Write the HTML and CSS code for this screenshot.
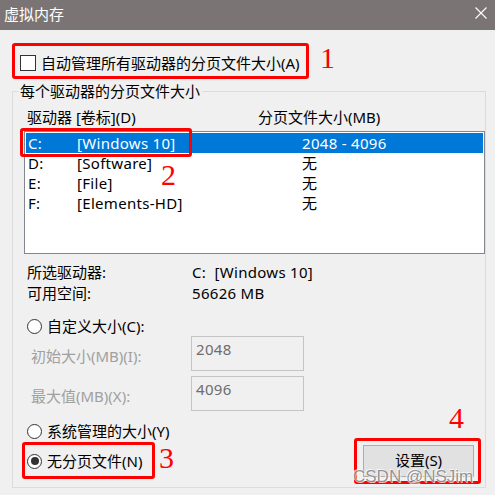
FILE: index.html
```html
<!DOCTYPE html>
<html lang="zh-CN">
<head>
<meta charset="utf-8">
<title>虚拟内存</title>
<link rel="stylesheet" href="styles.css">
</head>
<body>
<div class="window">
  <div class="titlebar">
    <span class="title">虚拟内存</span>
    <svg class="close" width="12" height="12" viewBox="0 0 12 12"><path d="M0.5 0.5L11.5 11.5M11.5 0.5L0.5 11.5" stroke="#ffffff" stroke-width="1.1" fill="none"/></svg>
  </div>
  <div class="content">
    <div class="auto-row"><span class="checkbox"></span><span>自动管理所有驱动器的分页文件大小(A)</span></div>
    <fieldset class="group">
      <legend>每个驱动器的分页文件大小</legend>
      <div class="list-head"><span class="col-drive">驱动器 [卷标](D)</span><span>分页文件大小(MB)</span></div>
      <div class="listbox">
        <div class="row selected"><span>C:</span><span>[Windows 10]</span><span>2048 - 4096</span></div>
        <div class="row"><span>D:</span><span>[Software]</span><span>无</span></div>
        <div class="row"><span>E:</span><span>[File]</span><span>无</span></div>
        <div class="row"><span>F:</span><span>[Elements-HD]</span><span>无</span></div>
      </div>
      <div class="info first"><span class="info-label">所选驱动器:</span><span class="info-value">C:&nbsp; [Windows 10]</span></div>
      <div class="info"><span class="info-label">可用空间:</span><span class="info-value">56626 MB</span></div>
      <div class="radio-row custom"><span class="radio"></span><span>自定义大小(C):</span></div>
      <div class="field"><span class="field-label">初始大小(MB)(I):</span><div class="textbox">2048</div></div>
      <div class="field second"><span class="field-label">最大值(MB)(X):</span><div class="textbox">4096</div></div>
      <div class="radio-row system"><span class="radio"></span><span>系统管理的大小(Y)</span></div>
      <div class="last-row">
        <div class="radio-row"><span class="radio checked"></span><span>无分页文件(N)</span></div>
        <button class="btn">设置(S)</button>
      </div>
    </fieldset>
  </div>

  <div class="mark mark1"></div>
  <div class="num num1">1</div>
  <div class="mark mark2"></div>
  <div class="num num2">2</div>
  <div class="mark mark3"></div>
  <div class="num num3">3</div>
  <div class="mark mark4"></div>
  <div class="num num4">4</div>
  <div class="watermark">CSDN @NSJim</div>
</div>
</body>
</html>
```
FILE: styles.css
```css
* { box-sizing: border-box; }
html, body { margin: 0; padding: 0; }
body {
  background: #f0f0f0;
  font-family: "Noto Sans", "Noto Sans CJK SC", sans-serif;
  font-size: 15px;
  color: #000;
}
.window {
  position: relative;
  width: 495px;
  height: 495px;
  overflow: hidden;
  background: #f0f0f0;
}
.titlebar {
  height: 30px;
  background: #7a7574;
  color: #fff;
  display: flex;
  align-items: center;
  justify-content: space-between;
  padding: 0 8px 2px 4px;
  line-height: 20px;
}
.close { display: block; margin-bottom: 3px; }

.auto-row {
  margin-top: 23px;
  height: 20px;
  display: flex;
  align-items: center;
  gap: 5px;
  padding-left: 20px;
  line-height: 20px;
}
.checkbox {
  width: 16px;
  height: 16px;
  border: 1px solid #333;
  background: #fff;
  flex: none;
}
.group {
  margin: 10px 9px 0 12px;
  padding: 0 0 10px 0;
  border: 1px solid #dcdcdc;
  min-inline-size: 0;
}
.group legend {
  margin-left: 5px;
  padding: 0 2px;
  line-height: 16px;
}
.list-head {
  margin-top: 8px;
  height: 20px;
  line-height: 20px;
  padding-left: 14px;
  display: flex;
}
.col-drive { width: 231px; }
.listbox {
  margin: 4px 0 0 11px;
  height: 123px;
  border: 1px solid #828790;
  padding: 1px;
  background: #fff;
}
.row {
  height: 20px;
  line-height: 20px;
  display: grid;
  grid-template-columns: 49px 225px 1fr;
  padding-left: 2px;
  letter-spacing: 0.3px;
}
.row.selected { background: #0078d7; color: #fff; }

.info {
  height: 21px;
  line-height: 21px;
  padding-left: 14px;
  display: flex;
}
.info.first { margin-top: 8px; }
.info-label { width: 165px; }
.info-value { letter-spacing: 0.3px; }

.radio-row {
  height: 20px;
  line-height: 20px;
  display: flex;
  align-items: center;
  gap: 5px;
  padding-left: 14px;
}
.radio-row.custom { margin-top: 12px; }
.radio-row.system { margin-top: 10px; }
.radio {
  width: 15px;
  height: 15px;
  border: 1px solid #333;
  border-radius: 50%;
  background: #fff;
  flex: none;
  display: flex;
  align-items: center;
  justify-content: center;
}
.radio.checked::after {
  content: "";
  width: 8px;
  height: 8px;
  border-radius: 50%;
  background: #333;
}
.field {
  display: flex;
  align-items: center;
  padding-left: 18px;
}
.field.second { margin-top: 5px; }
.field-label {
  width: 160px;
  color: #a0a0a0;
  padding-top: 5px;
  line-height: 20px;
}
.textbox {
  width: 113px;
  height: 35px;
  border: 1px solid #c4c4c4;
  padding: 2px 4px;
  line-height: 20px;
  color: #6d6d6d;
  letter-spacing: 0.3px;
}
.last-row {
  margin-top: 4px;
  height: 32px;
  display: flex;
  align-items: center;
  justify-content: space-between;
}
.btn {
  width: 111px;
  height: 32px;
  margin-right: 11px;
  background: #e1e1e1;
  border: 1px solid #adadad;
  font: inherit;
  line-height: 16px;
  color: #000;
  padding: 0 0 2px 0;
}

/* annotations drawn over the screenshot */
.mark {
  position: absolute;
  border: 3px solid #ff0000;
  border-radius: 3px;
}
.mark1 { left: 12px; top: 43px; width: 297px; height: 36px; }
.mark2 { left: 20px; top: 128px; width: 172px; height: 29px; }
.mark3 { left: 22px; top: 442px; width: 133px; height: 37px; }
.mark4 { left: 354px; top: 438px; width: 127px; height: 46px; }
.num {
  position: absolute;
  font-family: "Liberation Serif", serif;
  font-size: 30px;
  line-height: 30px;
  color: #ff0000;
}
.num1 { left: 320px; top: 43px; }
.num2 { left: 161px; top: 160px; }
.num3 { left: 159px; top: 443px; }
.num4 { left: 449px; top: 403px; }
.watermark {
  position: absolute;
  left: 353px;
  top: 470px;
  font-family: "Liberation Sans", sans-serif;
  font-size: 17px;
  line-height: 14px;
  color: rgba(110, 110, 110, 0.75);
  text-shadow: 0 0 1px #fff, 1px 1px 0 rgba(255,255,255,0.7), -1px -1px 0 rgba(255,255,255,0.7);
}
```
